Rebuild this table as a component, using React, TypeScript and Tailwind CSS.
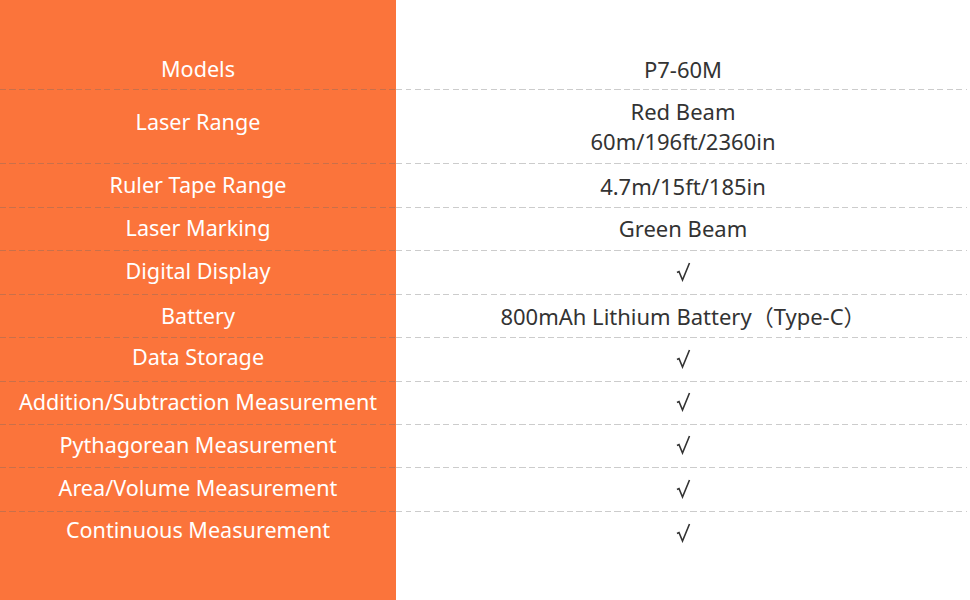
import React from "react";

type Row = { label: string; value: string[]; h: number; off: number };

const rows: Row[] = [
  { label: "Models", value: ["P7-60M"], h: 43, off: -2 },
  { label: "Laser Range", value: ["Red Beam", "60m/196ft/2360in"], h: 73, off: 8 },
  { label: "Ruler Tape Range", value: ["4.7m/15ft/185in"], h: 43, off: 0 },
  { label: "Laser Marking", value: ["Green Beam"], h: 42, off: 2 },
  { label: "Digital Display", value: ["√"], h: 43, off: 2 },
  { label: "Battery", value: ["800mAh Lithium Battery（Type-C）"], h: 42, off: 0 },
  { label: "Data Storage", value: ["√"], h: 43, off: 4 },
  { label: "Addition/Subtraction Measurement", value: ["√"], h: 42, off: 2 },
  { label: "Pythagorean Measurement", value: ["√"], h: 42, off: 2 },
  { label: "Area/Volume Measurement", value: ["√"], h: 43, off: 2 },
  { label: "Continuous Measurement", value: ["√"], h: 43, off: 6 },
];

function Check() {
  return (
    <svg width="15" height="20" viewBox="0 0 15 20" className="ml-[1px]" aria-label="√">
      <polyline
        points="1,10.5 3,9.5 6.5,18 13.5,1"
        fill="none"
        stroke="#333333"
        strokeWidth="1.6"
        strokeLinejoin="miter"
        strokeLinecap="butt"
      />
    </svg>
  );
}

function Sep() {
  return (
    <div className="flex h-px">
      <div className="w-[396px] bg-[#fb743b]">
        <div className="h-px w-full bg-[repeating-linear-gradient(to_right,#c9704a_0_6px,transparent_6px_9.5px)]" />
      </div>
      <div className="flex-1 bg-white pr-[3px]">
        <div className="h-px w-full bg-[repeating-linear-gradient(to_right,#cccccc_0_6px,transparent_6px_9.5px)]" />
      </div>
    </div>
  );
}

export default function App() {
  return (
    <div
      className="flex h-[600px] w-[970px] flex-col overflow-hidden"
      style={{ fontFamily: '"Noto Sans", "Noto Sans CJK SC", sans-serif' }}
    >
      <div className="flex h-[46px]">
        <div className="w-[396px] bg-[#fb743b]" />
        <div className="flex-1 bg-white" />
      </div>
      {rows.map((r, i) => (
        <React.Fragment key={r.label}>
          <div className="flex" style={{ height: r.h }}>
            <div
              className="flex w-[396px] items-center justify-center bg-[#fb743b] text-[21.6px] text-white"
              style={r.off >= 0 ? { paddingBottom: r.off } : { paddingTop: -r.off * 1.5 }}
            >
              {r.label}
            </div>
            <div
              className="flex flex-1 flex-col items-center justify-center bg-white text-[22px] leading-[30px] text-[#333333]"
              style={r.off >= 0 ? { paddingBottom: r.value.length > 1 ? 2 : Math.min(r.off, 2) } : { paddingTop: 2 }}
            >
              {r.value.map((v) => (v === "√" ? <Check key={v} /> : <div key={v}>{v}</div>))}
            </div>
          </div>
          {i < rows.length - 1 && <Sep />}
        </React.Fragment>
      ))}
      <div className="flex flex-1">
        <div className="w-[396px] bg-[#fb743b]" />
        <div className="flex-1 bg-white" />
      </div>
    </div>
  );
}
